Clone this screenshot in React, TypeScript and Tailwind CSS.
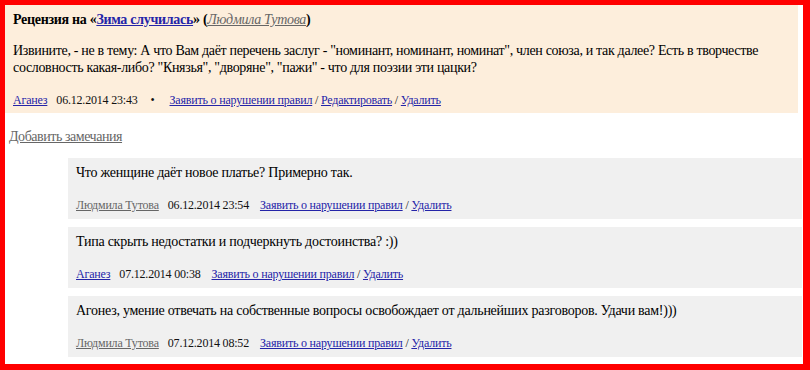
import React from "react";

const serif = { fontFamily: '"Liberation Serif", "Times New Roman", serif' };

function Comment({ author, authorGray, date, text }: { author: string; authorGray: boolean; date: string; text: string }) {
  return (
    <div className="ml-[63px] mr-[1px] bg-[#f0f0f0] px-[8px] pt-[6px] pb-[6px]">
      <div className="text-[14px] leading-[18px] tracking-[-0.25px] text-[#000]">{text}</div>
      <div className="mt-[15px] text-[12px] leading-[16px] tracking-[-0.2px] text-[#111]">
        <a href="#" className={authorGray ? "text-[#666] underline" : "text-[#2424a8] underline"}>{author}</a>
        <span className="ml-[9px]">{date}</span>
        <a href="#" className="ml-[11px] text-[#2424a8] underline">Заявить о нарушении правил</a>
        <span> / </span>
        <a href="#" className="text-[#2424a8] underline">Удалить</a>
      </div>
    </div>
  );
}

export default function App() {
  return (
    <div style={serif} className="w-[810px] h-[370px] bg-[#ff0000] pt-[5px] pl-[5px] pr-[7px] pb-[6px]">
      <div className="h-full bg-white overflow-hidden">
        <div className="mr-[5px] bg-[#fdeedc] pl-[8px] pr-[8px] pt-[6px] pb-[5px]">
          <div className="text-[14px] leading-[18px] tracking-[-0.3px] font-bold text-[#000]">
            Рецензия на «<a href="#" className="text-[#2424a8] underline">Зима случилась</a>» (<a href="#" className="italic font-normal text-[#666] underline">Людмила Тутова</a>)
          </div>
          <div className="mt-[13px] text-[14px] leading-[17px] tracking-[-0.33px] text-[#000]">
            Извините, - не в тему: А что Вам даёт перечень заслуг - "номинант, номинант, номинат", член союза, и так далее? Есть в творчестве сословность какая-либо? "Князья", "дворяне", "пажи" - что для поэзии эти цацки?
          </div>
          <div className="mt-[16px] text-[12px] leading-[16px] tracking-[-0.2px] text-[#111]">
            <a href="#" className="text-[#2424a8] underline">Аганез</a>
            <span className="ml-[9px]">06.12.2014 23:43</span>
            <span className="ml-[13px]">•</span>
            <a href="#" className="ml-[15px] text-[#2424a8] underline">Заявить о нарушении правил</a>
            <span> / </span>
            <a href="#" className="text-[#2424a8] underline">Редактировать</a>
            <span> / </span>
            <a href="#" className="text-[#2424a8] underline">Удалить</a>
          </div>
        </div>
        <div className="pl-[4px] pt-[15px] pb-[12px] text-[14px] leading-[18px] tracking-[-0.45px]">
          <a href="#" className="text-[#666] underline">Добавить замечания</a>
        </div>
        <div className="flex flex-col gap-[8px]">
          <Comment author="Людмила Тутова" authorGray date="06.12.2014 23:54" text="Что женщине даёт новое платье? Примерно так." />
          <Comment author="Аганез" authorGray={false} date="07.12.2014 00:38" text="Типа скрыть недостатки и подчеркнуть достоинства? :))" />
          <Comment author="Людмила Тутова" authorGray date="07.12.2014 08:52" text="Агонез, умение отвечать на собственные вопросы освобождает от дальнейших разговоров. Удачи вам!)))" />
        </div>
      </div>
    </div>
  );
}
